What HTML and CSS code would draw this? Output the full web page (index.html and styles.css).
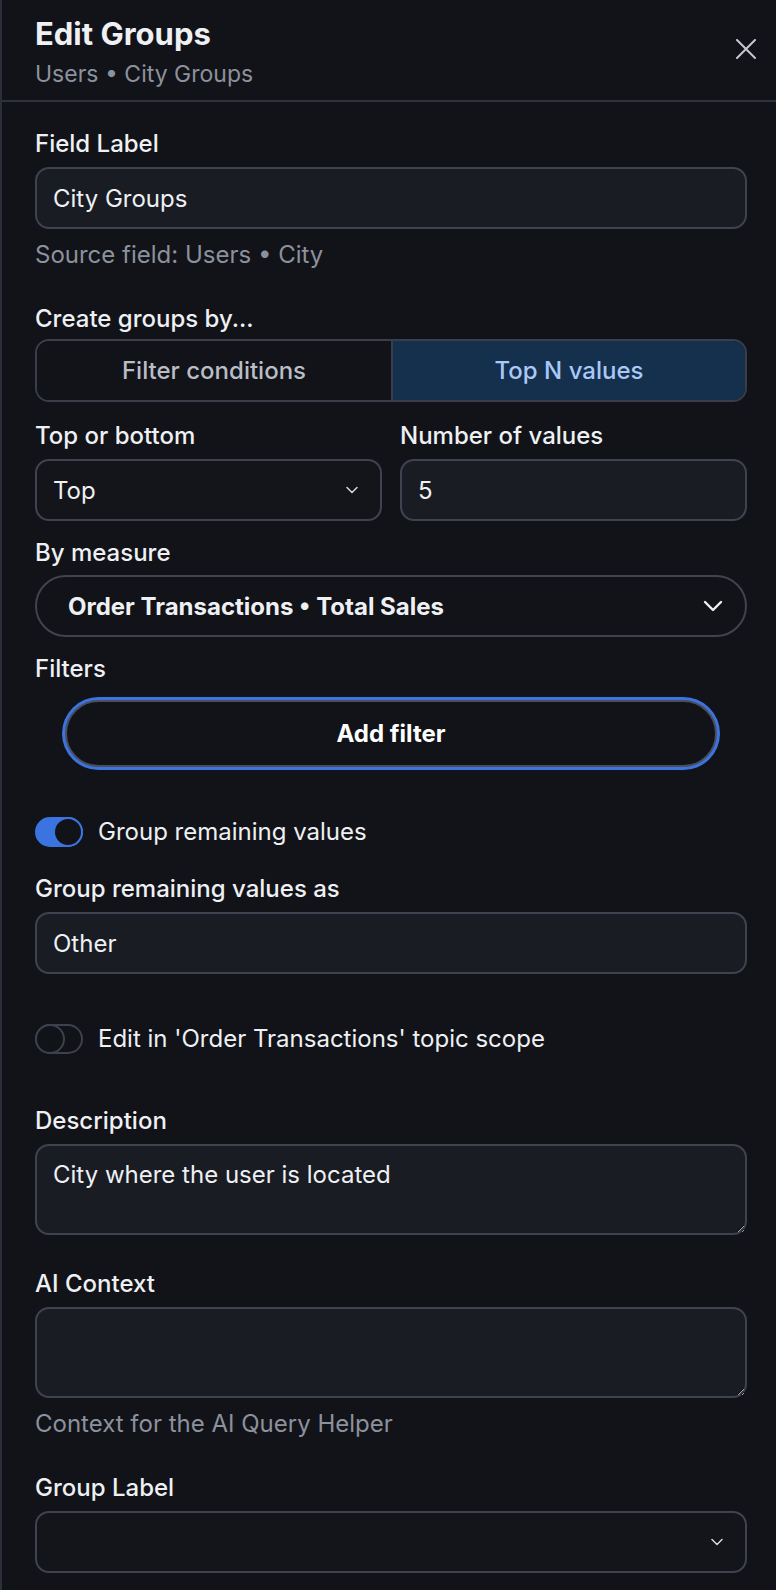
FILE: index.html
```html
<!DOCTYPE html>
<html lang="en">
<head>
    <meta charset="UTF-8">
    <meta name="viewport" content="width=device-width, initial-scale=1.0">
    <title>Edit Groups</title>
    <link rel="stylesheet" href="styles.css">
</head>
<body>
  <div class="panel">
    <header class="panel-header">
      <div>
        <h1 class="panel-title">Edit Groups</h1>
        <p class="panel-subtitle">Users &bull; City Groups</p>
      </div>
      <button class="close-btn" type="button" aria-label="Close">
        <svg width="20" height="20" viewBox="0 0 20 20"><path d="M1 1 L19 19 M19 1 L1 19" stroke="currentColor" stroke-width="2" stroke-linecap="round"/></svg>
      </button>
    </header>

    <form class="panel-body">
      <div class="field">
        <label class="field-label" for="field-label">Field Label</label>
        <input class="text-input" id="field-label" type="text" value="City Groups">
        <p class="hint">Source field: Users &bull; City</p>
      </div>

      <div class="field">
        <label class="field-label seg-label">Create groups by...</label>
        <div class="segmented">
          <button type="button" class="segment">Filter conditions</button>
          <button type="button" class="segment active">Top N values</button>
        </div>
      </div>

      <div class="field-row">
        <div>
          <label class="field-label">Top or bottom</label>
          <div class="select-box">
            <span>Top</span>
            <svg width="12" height="8" viewBox="0 0 12 8"><path d="M1 1.5 L6 6.5 L11 1.5" fill="none" stroke="currentColor" stroke-width="1.5" stroke-linecap="round" stroke-linejoin="round"/></svg>
          </div>
        </div>
        <div>
          <label class="field-label" for="num-values">Number of values</label>
          <input class="text-input" id="num-values" type="text" value="5">
        </div>
      </div>

      <div class="field tight">
        <label class="field-label measure-label">By measure</label>
        <div class="pill-select">
          <span>Order Transactions &bull; Total Sales</span>
          <svg width="20" height="12" viewBox="0 0 20 12"><path d="M2 2 L10 10 L18 2" fill="none" stroke="currentColor" stroke-width="2.4" stroke-linecap="round" stroke-linejoin="round"/></svg>
        </div>
      </div>

      <div class="field tight">
        <label class="field-label">Filters</label>
        <button type="button" class="add-filter">Add filter</button>
      </div>

      <div class="toggle-row first-toggle">
        <span class="switch on"><span class="knob"></span></span>
        <span>Group remaining values</span>
      </div>

      <div class="field remaining">
        <label class="field-label" for="other">Group remaining values as</label>
        <input class="text-input" id="other" type="text" value="Other">
      </div>

      <div class="toggle-row scope-toggle">
        <span class="switch"><span class="knob"></span></span>
        <span>Edit in 'Order Transactions' topic scope</span>
      </div>

      <div class="field description">
        <label class="field-label" for="desc">Description</label>
        <textarea class="text-area" id="desc">City where the user is located</textarea>
      </div>

      <div class="field">
        <label class="field-label" for="ai">AI Context</label>
        <textarea class="text-area" id="ai"></textarea>
        <p class="hint">Context for the AI Query Helper</p>
      </div>

      <div class="field">
        <label class="field-label">Group Label</label>
        <div class="select-box">
          <span></span>
          <svg width="12" height="8" viewBox="0 0 12 8"><path d="M1 1.5 L6 6.5 L11 1.5" fill="none" stroke="currentColor" stroke-width="1.5" stroke-linecap="round" stroke-linejoin="round"/></svg>
        </div>
      </div>
    </form>
  </div>
</body>
</html>
```

FILE: styles.css
```css
* {
  box-sizing: border-box;
}

html, body {
  margin: 0;
  height: 100%;
  background-color: #111318;
}

body {
  font-family: Inter, "Liberation Sans", sans-serif;
  color: #eef0f3;
  font-size: 24px;
}

.panel {
  min-height: 100%;
  border-left: 2px solid #2b2f39;
}

.panel-header {
  display: flex;
  justify-content: space-between;
  align-items: flex-start;
  padding: 16px 20px 12px 33px;
  border-bottom: 2px solid #2e323c;
}

.panel-title {
  margin: 0;
  font-size: 31px;
  line-height: 36px;
  font-weight: 700;
}

.panel-subtitle {
  margin: 8px 0 0;
  font-size: 23px;
  line-height: 28px;
  color: #8c919d;
}

.close-btn {
  background: none;
  border: none;
  padding: 0;
  margin-top: 23px;
  color: #c5c8d0;
  cursor: pointer;
  display: flex;
}

.panel-body {
  padding: 27px 29px 40px 33px;
}

.field {
  margin-top: 34px;
}

.field:first-child {
  margin-top: 0;
}

.field.tight {
  margin-top: 17px;
}

.field-label {
  display: block;
  font-weight: 500;
  line-height: 30px;
  margin-bottom: 8px;
}

.seg-label {
  margin-bottom: 5px;
}

.measure-label {
  margin-bottom: 7px;
}

.text-input,
.text-area,
.select-box {
  display: block;
  width: 100%;
  height: 62px;
  padding: 0 16px;
  font-family: inherit;
  font-size: 24px;
  color: #eef0f3;
  background-color: #1a1c24;
  border: 2px solid #3f4350;
  border-radius: 14px;
  outline: none;
}

.text-area {
  height: 91px;
  padding: 14px 16px;
  line-height: 30px;
  resize: vertical;
  color-scheme: dark;
}

.select-box {
  display: flex;
  align-items: center;
  justify-content: space-between;
  background-color: #13151b;
  padding-right: 22px;
}

.select-box svg {
  color: #d6d8de;
}

.hint {
  margin: 11px 0 0;
  line-height: 30px;
  color: #8c919d;
}

.segmented {
  display: grid;
  grid-template-columns: 1fr 1fr;
  height: 63px;
  border: 2px solid #3a3e4a;
  border-radius: 14px;
  overflow: hidden;
}

.segment {
  background: #111318;
  border: none;
  font-family: inherit;
  font-size: 24px;
  font-weight: 500;
  color: #b9bdc6;
}

.segment + .segment {
  border-left: 2px solid #3a3e4a;
}

.segment.active {
  background: #15304d;
  color: #a9c8f8;
}

.field-row {
  display: grid;
  grid-template-columns: 1fr 1fr;
  gap: 18px;
  margin-top: 19px;
}

.pill-select {
  display: flex;
  align-items: center;
  justify-content: space-between;
  height: 62px;
  padding: 0 22px 0 31px;
  border: 2px solid #40444f;
  border-radius: 31px;
  font-weight: 700;
}

.add-filter {
  display: block;
  width: calc(100% - 60px);
  height: 67px;
  margin: 16px auto 0;
  background: #111318;
  border: 2px solid #4a4e5a;
  border-radius: 34px;
  box-shadow: 0 0 0 3px #3b74e0;
  font-family: inherit;
  font-size: 24px;
  font-weight: 700;
  color: #ffffff;
}

.toggle-row {
  display: flex;
  align-items: center;
  gap: 15px;
  height: 30px;
  line-height: 30px;
}

.first-toggle {
  margin-top: 50px;
}

.field.remaining {
  margin-top: 27px;
}

.scope-toggle {
  margin-top: 50px;
}

.field.description {
  margin-top: 52px;
}

.switch {
  display: flex;
  justify-content: flex-start;
  width: 48px;
  height: 30px;
  border: 2px solid #3d414d;
  border-radius: 15px;
  background: #111318;
}

.switch .knob {
  width: 30px;
  height: 30px;
  margin: -2px;
  border: 2px solid #3d414d;
  border-radius: 50%;
  background: #111318;
}

.switch.on {
  justify-content: flex-end;
  background: #3b74e0;
  border-color: #3b74e0;
}

.switch.on .knob {
  border-color: #3b74e0;
}
```
